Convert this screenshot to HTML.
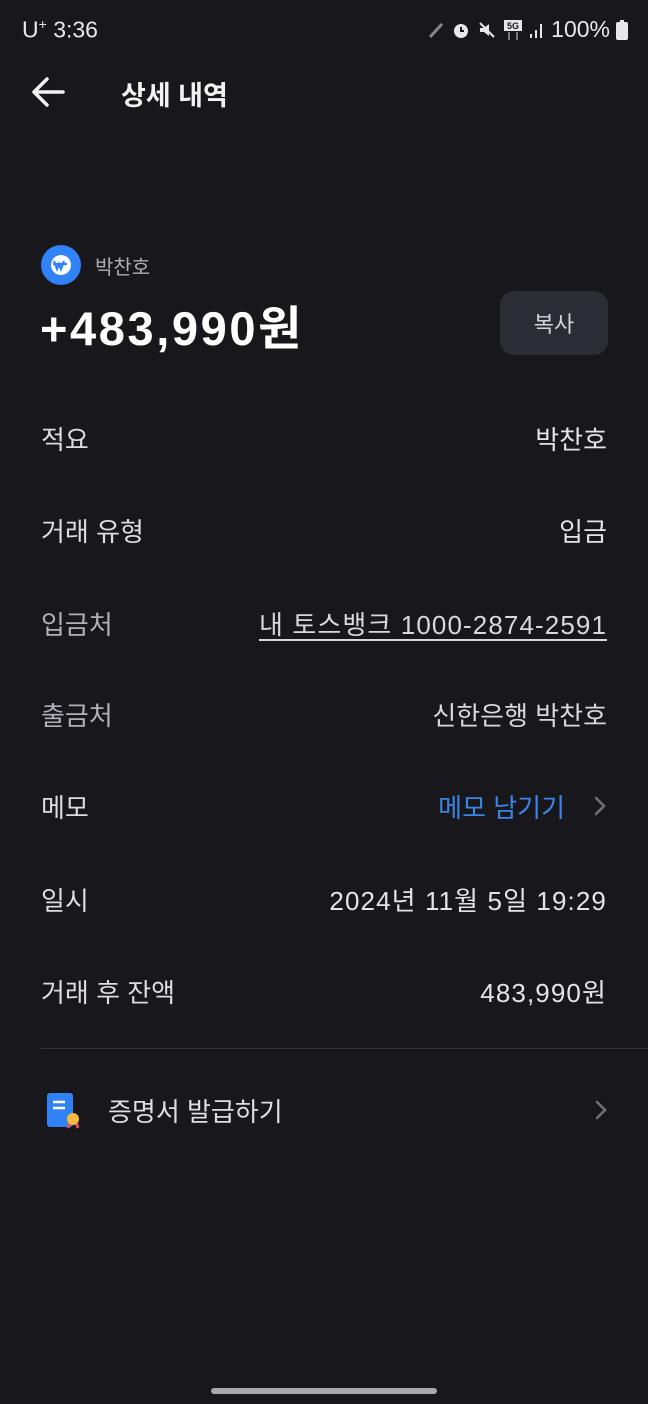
<!DOCTYPE html>
<html><head><meta charset="utf-8">
<style>
*{margin:0;padding:0;box-sizing:border-box}
body{width:648px;height:1404px;background:#18171c;font-family:"Liberation Sans","Noto Sans CJK KR",sans-serif;color:#e6e6ea;position:relative;overflow:hidden}
.abs{position:absolute}
.row{position:absolute;left:41px;right:41px;height:40px;display:flex;justify-content:space-between;align-items:center;font-size:26px}
.lab{color:#dcdce1}
.lab.g{color:#b0b1b8}
.val{color:#e4e4e8}
.n{letter-spacing:1.1px}
</style></head><body>
<div class="abs" style="left:22px;top:16px;font-size:23px;color:#e8e8ea">U<sup style="font-size:14px">+</sup> 3:36</div>
<div class="abs" style="right:20px;top:16px;font-size:23px;color:#e8e8ea;display:flex;align-items:center;gap:6px">
<svg width="18" height="18" viewBox="0 0 18 18"><path d="M3 16L15 3" stroke="#888" stroke-width="3"/></svg>
<svg width="20" height="20" viewBox="0 0 20 20"><circle cx="10" cy="11" r="7" fill="#e8e8ea"/><path d="M10 7v4h3" stroke="#18171c" stroke-width="2" fill="none"/></svg>
<svg width="20" height="20" viewBox="0 0 20 20"><path d="M3 8h4l5-4v12l-5-4H3z" fill="#e8e8ea"/><path d="M3 3l14 14" stroke="#e8e8ea" stroke-width="2"/></svg>
<svg width="20" height="22" viewBox="0 0 20 22"><rect x="1" y="1" width="18" height="11" fill="#e8e8ea"/><text x="10" y="10" font-size="9" text-anchor="middle" fill="#18171c" font-weight="bold" font-family="Liberation Sans">5G</text><path d="M6 13v8M14 13v8" stroke="#999" stroke-width="1.5"/></svg>
<svg width="16" height="18" viewBox="0 0 16 18"><rect x="1" y="13" width="2" height="4" fill="#e8e8ea"/><rect x="6" y="9" width="2" height="8" fill="#e8e8ea"/><rect x="11" y="3" width="2" height="14" fill="#e8e8ea"/></svg>
<span>100%</span>
<svg width="12" height="20" viewBox="0 0 12 20"><rect x="4" y="0" width="4" height="3" fill="#e8e8ea"/><rect x="0" y="2" width="12" height="18" rx="2" fill="#e8e8ea"/></svg>
</div>
<svg class="abs" style="left:30px;top:76px" width="36" height="32" viewBox="0 0 36 32"><path d="M33 16H4M17 3L4 16l13 13" stroke="#f2f2f4" stroke-width="3.5" fill="none" stroke-linecap="round" stroke-linejoin="round"/></svg>
<div class="abs" style="left:121px;top:74px;font-size:27px;font-weight:bold;color:#f2f2f4">상세 내역</div>

<svg class="abs" style="left:41px;top:245px" width="40" height="40" viewBox="0 0 40 40"><circle cx="20" cy="20" r="20" fill="#3182f6"/><circle cx="20" cy="20" r="10" fill="#fff"/><path d="M13 16l3 8 2-5 2 5 3-8M12 19h14" stroke="#3182f6" stroke-width="2.2" fill="none"/></svg>
<div class="abs" style="left:95px;top:251px;font-size:20px;color:#aeafb6">박찬호</div>
<div class="abs" style="left:40px;top:290px;font-size:47px;font-weight:bold;color:#fff;letter-spacing:2.6px">+483,990원</div>
<div class="abs" style="left:500px;top:291px;width:108px;height:64px;border-radius:14px;background:#2c2c35;color:#d4d4da;font-size:22px;display:flex;align-items:center;justify-content:center">복사</div>

<div class="row" style="top:418px"><span class="lab">적요</span><span class="val">박찬호</span></div>
<div class="row" style="top:510px"><span class="lab">거래 유형</span><span class="val">입금</span></div>
<div class="row" style="top:603px"><span class="lab g">입금처</span><span class="val n" style="text-decoration:underline;text-underline-offset:5px;text-decoration-thickness:2px;color:#d8d8dd">내 토스뱅크 1000-2874-2591</span></div>
<div class="row" style="top:694px"><span class="lab g">출금처</span><span class="val" style="color:#d8d8dd">신한은행 박찬호</span></div>
<div class="row" style="top:786px"><span class="lab">메모</span><span style="color:#3a86e8;display:flex;align-items:center">메모 남기기<svg style="margin-left:28px" width="14" height="22" viewBox="0 0 14 22"><path d="M3 3l8 8-8 8" stroke="#6f7078" stroke-width="2.6" fill="none" stroke-linecap="round"/></svg></span></div>
<div class="row" style="top:879px"><span class="lab">일시</span><span class="val n">2024년 11월 5일 19:29</span></div>
<div class="row" style="top:971px"><span class="lab">거래 후 잔액</span><span class="val n">483,990원</span></div>
<div class="abs" style="left:41px;right:0;top:1048px;height:1px;background:#33333b"></div>

<svg class="abs" style="left:46px;top:1092px" width="38" height="38" viewBox="0 0 38 38"><rect x="1" y="1" width="26" height="34" rx="3" fill="#3182f6"/><path d="M7 10h12M7 16h12" stroke="#fff" stroke-width="2.4"/><path d="M24 30l-2 6M30 30l2 6" stroke="#e05060" stroke-width="3"/><circle cx="27" cy="27" r="6" fill="#f6b93b"/></svg>
<div class="abs" style="left:108px;top:1092px;font-size:26px;color:#dedee3">증명서 발급하기</div>
<svg class="abs" style="left:594px;top:1099px" width="14" height="22" viewBox="0 0 14 22"><path d="M3 3l8 8-8 8" stroke="#6f7078" stroke-width="2.6" fill="none" stroke-linecap="round"/></svg>

<div class="abs" style="left:211px;top:1388px;width:226px;height:6px;border-radius:3px;background:#a8a8ae"></div>
</body></html>
